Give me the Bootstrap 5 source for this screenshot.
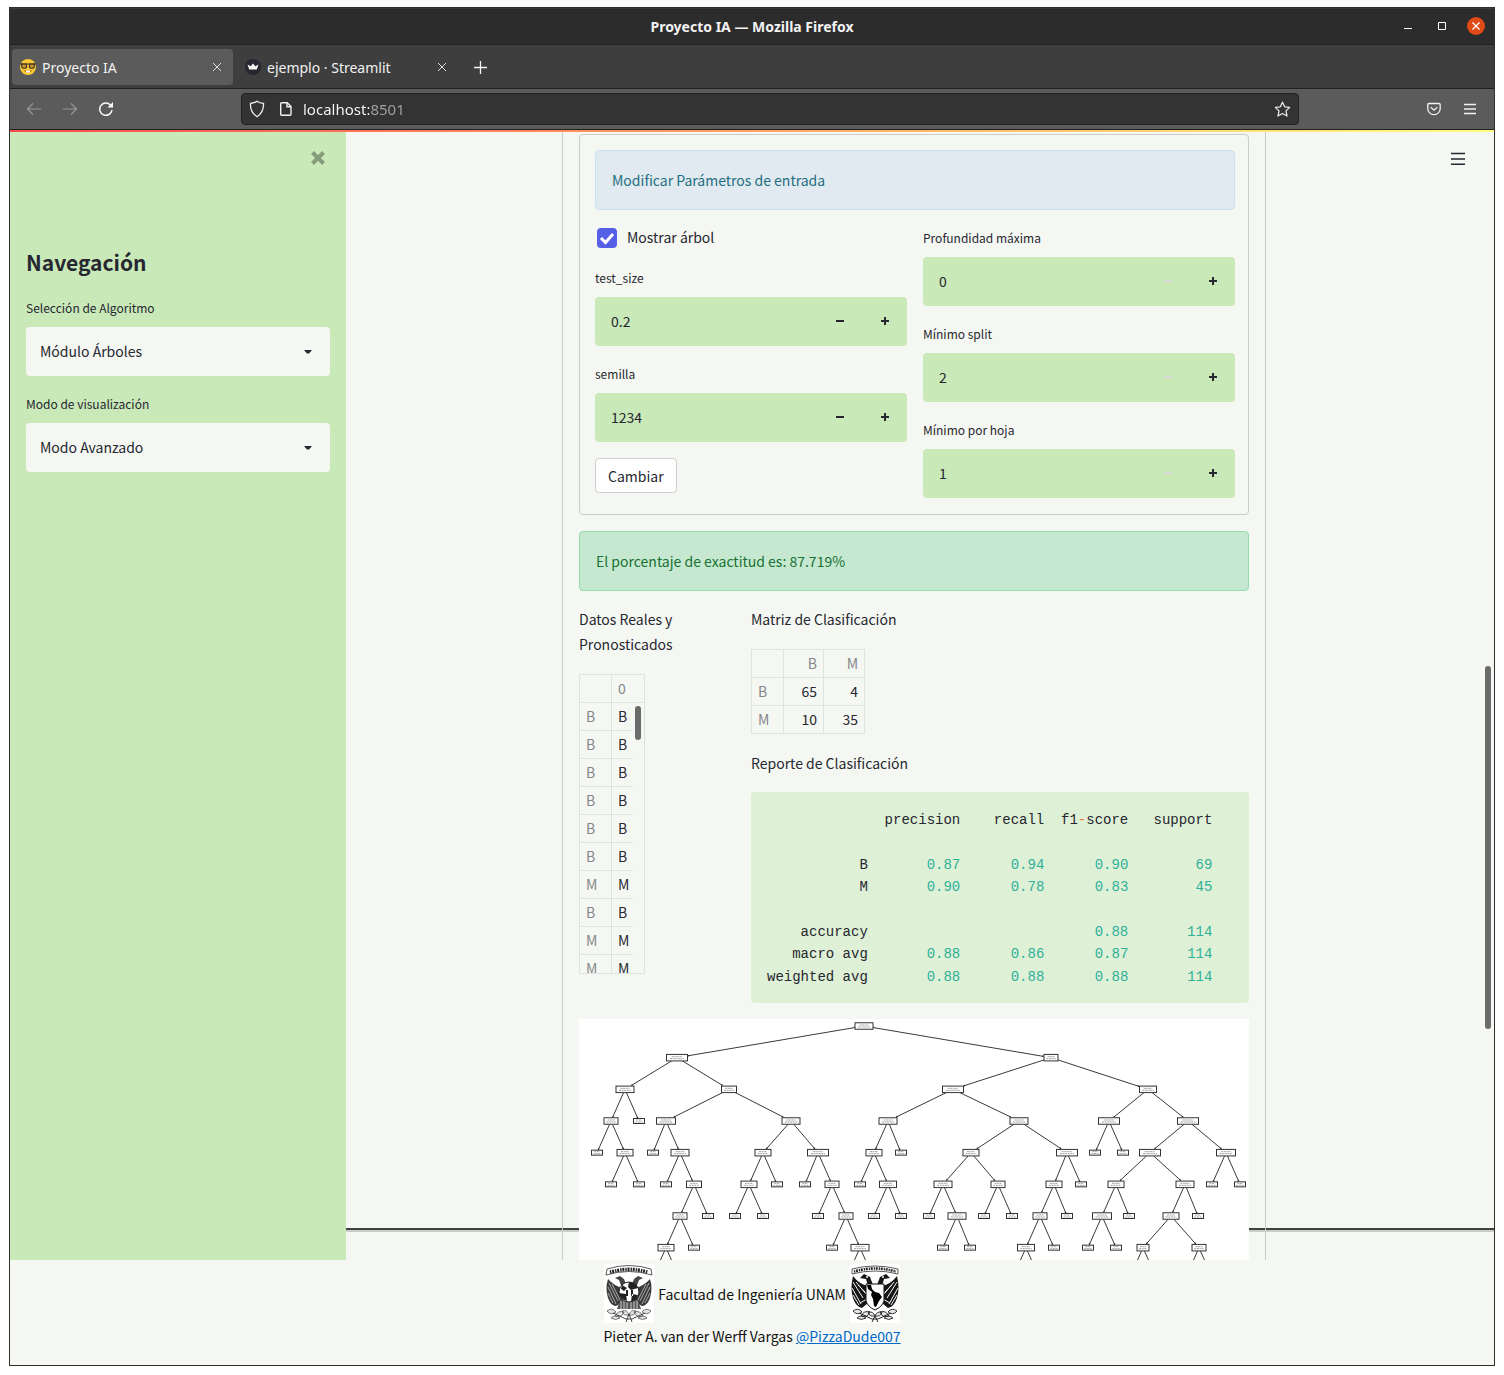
<!DOCTYPE html>
<html lang="es">
<head>
<meta charset="utf-8">
<meta name="viewport" content="width=device-width, initial-scale=1">
<title>Proyecto IA</title>
<link href="https://cdn.jsdelivr.net/npm/bootstrap@5.3.0/dist/css/bootstrap.min.css" rel="stylesheet">
<style>
:root { --ink:#262730; --paper:#f5f7f2; --green:#c9e9b8; --line:#cbcdca; --cell:#dfe2de; }
body { background:#fff; color:var(--ink); padding:7px 9px 9px; font:14px/26px "Noto Sans CJK SC", "Noto Sans", sans-serif; }
button, input, select { font:inherit; color:inherit; }
.desk-window { border:1px solid #2f2f2f; background:var(--paper); }
.chrome { font:14px/20px "Noto Sans", "Open Sans", sans-serif; color:#f2f2f2; }
.chrome button { background:none; border:0; padding:0; display:flex; align-items:center; justify-content:center; }
.title-bar { height:37px; background:#2c2c2c; border-top:1px solid #3b3b3b; border-bottom:1px solid #202020; }
.win-title { font-weight:700; }
.win-ctl { right:9px; top:0; bottom:2px; gap:16px; }
.win-ctl button { width:18px; height:18px; }
.tab-strip { height:44px; background:#3e3e3e; border-bottom:1px solid #202020; padding:4px 2px 3px; }
.tab-item { height:36px; width:221px; border-radius:4px; padding:0 7px 0 8px; gap:6px; }
.tab-item span { padding-top:2px; }
.tab-item.current { background:#5b5b5b; }
.tab-item button { width:18px; height:18px; }
.tool-bar { height:41px; background:#5b5b5b; border-bottom:1px solid #202020; }
.nav-btns { padding-left:15px; gap:18px; width:231px; }
.nav-btns button, .nav-end button { width:18px; height:18px; }
.url-box { height:32px; background:#333; border:1px solid #222; border-radius:4px; padding:0 7px; gap:11px; width:1058px; min-width:0; flex-shrink:1; }
.url-box input { border:0; outline:0; padding:0; font-size:15px; flex:1; min-width:0; color:transparent; background:linear-gradient(90deg,#fbfbfb 66px,#a3a3a3 66px); -webkit-background-clip:text; background-clip:text; }
.nav-end { padding-right:15px; gap:18px; }
.load-bar { height:2px; background:linear-gradient(90deg,#ff4b4b,#fffd80); }
.side-nav { width:336px; flex:none; background:var(--green); padding:0 16px; }
.side-close { height:52px; padding-right:4px; }
.side-close button { border:0; background:none; padding:0; width:16px; height:52px; display:flex; align-items:center; justify-content:center; }
.side-title { font-size:21px; line-height:36px; font-weight:700; margin:60px 0 16px; }
.field-label { display:block; font-size:12px; line-height:23px; margin-bottom:8px; }
.pick select { appearance:none; width:100%; height:49px; border:0; border-radius:4px; background:var(--paper); padding:0 14px 1px; }
.pick svg { right:17px; top:22px; pointer-events:none; }
.main-area { min-width:0; padding-right:12px; overflow:hidden; }
.foot-rule { left:0; right:0; bottom:28px; height:4px; background:linear-gradient(#3f4241 2px,#cbcdca 2px); margin:0; }
.main-menu { right:28px; top:19px; border:0; background:none; padding:0; line-height:0; }
.page-thumb { right:3px; top:534px; width:6px; height:363px; border-radius:3px; background:#6b6b6b; }
.center-block { max-width:704px; border:solid var(--line); border-width:0 1px; padding:2px 16px 0; }
.param-form { border:1px solid var(--line); border-radius:4px; padding:15px 13px 16px 15px; }
.note { height:60px; border:1px solid; border-radius:4px; padding:0 16px 1px; }
.note-info { background:#e0eaf0; border-color:#cae0ef; color:#1f6f80; }
.note-ok { background:#c6e8d0; border-color:#98dbae; color:#177233; }
.stack { display:flex; flex-direction:column; gap:16px; }
.tick-row { height:24px; gap:10px; padding-left:2px; }
.tick-row label { padding-bottom:2px; }
.tick-row input { appearance:none; width:20px; height:20px; margin:0; border-radius:4px; background:#5560e6; display:block; }
.tick-row svg { left:2px; top:4px; pointer-events:none; }
.num-box { height:49px; border-radius:4px; background:var(--green); overflow:hidden; }
.num-box input { flex:1; min-width:0; border:0; outline:0; background:none; padding:0 16px 2px; }
.num-box button { width:45px; border:0; background:none; padding:0 0 1px; line-height:0; }
.num-box button:disabled { color:#d5dbd8; }
.send-btn { align-self:flex-start; height:35px; border:1px solid #ccced0; border-radius:4px; background:#fff; padding:0 12px; }
.col-a { flex:0 0 156px; }
.cap-text { line-height:25px; }
.grid-tbl { border-collapse:collapse; line-height:27px; table-layout:fixed; }
.grid-tbl th { font-weight:400; color:#85878a; }
.grid-tbl th, .grid-tbl td { border:1px solid var(--cell); padding:0 6px; height:28px; }
.scroll-tbl { width:66px; height:300px; border:1px solid var(--cell); overflow:hidden; margin-top:17px; }
.scroll-tbl .grid-tbl { width:65px; margin:-1px 0 0 -1px; }
.scroll-tbl .gutter { border:0; padding:0; }
.scroll-tbl td { border-right:0; }
.tbl-thumb { right:3px; top:31px; width:6px; height:34px; border-radius:3px; background:#6b6b6b; }
.matrix { width:114px; text-align:right; margin:17px 0; }
.matrix tbody th { text-align:left; }
.report { margin:16px 0 0; padding:17px 16px 15px; border-radius:4px; background:#def0d5; font:14px/1.6 "Liberation Mono", monospace; color:var(--ink); overflow:hidden; }
.report b { font-weight:400; color:#2eb09a; }
.report i { font-style:normal; color:#ed7d31; }
.tree-pic { background:#fff; display:block; width:100%; overflow:hidden; }
.site-foot { padding:4px 0 16px; text-align:center; color:#111; }
.site-foot a { color:#0068c9; }
</style>
</head>
<body>
<div class="desk-window">
  <header class="chrome">
    <div class="title-bar position-relative d-flex align-items-center justify-content-center">
      <span class="win-title">Proyecto IA — Mozilla Firefox</span>
      <div class="win-ctl position-absolute d-flex align-items-center">
        <button type="button" aria-label="Minimizar"><svg width="18" height="18"><path d="M5 11.500h8" stroke="#fff"/></svg></button>
        <button type="button" aria-label="Maximizar"><svg width="18" height="18"><path d="M5.500 5.500h7v7h-7z" fill="none" stroke="#fff"/></svg></button>
        <button type="button" aria-label="Cerrar"><svg width="18" height="18"><circle cx="9" cy="9" r="9" fill="#df4a16"/><path d="M5.500 5.500l7 7m0-7l-7 7" stroke="#fff" stroke-width="1.400"/></svg></button>
      </div>
    </div>
    <div class="tab-strip d-flex">
      <div class="tab-item current d-flex align-items-center">
        <svg width="16" height="16" viewBox="0 0 16 16"><circle cx="8" cy="8" r="8" fill="#fcc934"/><path d="M1.500 5h5v3.500q-2.500 1.500-4.500 0zM9.500 5h5L14 8.500q-2 1.500-4.500 0z" fill="#d29a2e" stroke="#3d3428" stroke-width="1.200"/><path d="M0 5h16" stroke="#3d3428"/><path d="M3.500 11.500h9q-4.500 4-9 0z" fill="#a3651d"/><path d="M6 11.500h4v2H6z" fill="#fff"/></svg>
        <span class="flex-grow-1">Proyecto IA</span>
        <button type="button" aria-label="Cerrar pestaña"><svg width="10" height="10"><path d="M1 1l8 8m0-8l-8 8" stroke="#ddd"/></svg></button>
      </div>
      <div class="tab-item d-flex align-items-center ms-1">
        <svg width="16" height="16" viewBox="0 0 16 16"><circle cx="8" cy="8" r="8" fill="#262730"/><path d="M2.500 5.500l3.200 1.700L8 4.500l2.300 2.700 3.200-1.700-1.700 5H4.200z" fill="#f4f4f4"/></svg>
        <span class="flex-grow-1">ejemplo · Streamlit</span>
        <button type="button" aria-label="Cerrar pestaña"><svg width="10" height="10"><path d="M1 1l8 8m0-8l-8 8" stroke="#ddd"/></svg></button>
      </div>
      <button type="button" class="ms-3" aria-label="Pestaña nueva"><svg width="13" height="13"><path d="M6.500 0v13M0 6.500h13" stroke="#f4f4f4" stroke-width="1.300"/></svg></button>
    </div>
    <div class="tool-bar d-flex align-items-center">
      <div class="nav-btns d-flex">
        <button type="button" aria-label="Atrás" disabled><svg width="16" height="14" fill="none" stroke="#979797" stroke-width="1.200"><path d="M15 7H1.500M7 1.500L1.500 7 7 12.500"/></svg></button>
        <button type="button" aria-label="Adelante" disabled><svg width="16" height="14" fill="none" stroke="#979797" stroke-width="1.200"><path d="M1 7h13.500M9 1.500L14.500 7 9 12.500"/></svg></button>
        <button type="button" aria-label="Recargar"><svg width="16" height="16" fill="none" stroke="#fbfbfb" stroke-width="1.500"><path d="M14 9A6.200 6.200 0 1 1 12.500 4"/><path d="M15 1v5.500H9.500z" fill="#fbfbfb" stroke="none"/></svg></button>
      </div>
      <div class="url-box d-flex align-items-center">
        <svg width="16" height="18" viewBox="0 0 16 18" fill="none" stroke="#f1f1f1" stroke-width="1.300"><path d="M8 1.200c2 1.600 4 2 6.500 2.200.3 6-1.500 10-6.500 13.300C3 13.400 1.200 9.400 1.500 3.400 4 3.200 6 2.800 8 1.200z"/></svg>
        <svg class="ms-1" width="12" height="14" viewBox="0 0 12 14" fill="none" stroke="#f1f1f1" stroke-width="1.400"><path d="M1.700.8h5.600L11 4.500v7.800q0 1-1 1H1.700q-1 0-1-1V1.700q0-1 1-1z"/><path d="M7 .8v4h4"/></svg>
        <input type="text" aria-label="Dirección" value="localhost:8501">
        <svg width="17" height="17" viewBox="0 0 17 17" fill="none" stroke="#e8e8e8" stroke-width="1.300" stroke-linejoin="round"><path d="M8.500 1.200l2.200 4.600 5 .6-3.700 3.500 1 5.100-4.500-2.500L4 15l1-5.100L1.300 6.400l5-.6z"/></svg>
      </div>
      <div class="nav-end ms-auto d-flex">
        <button type="button" aria-label="Pocket"><svg width="14" height="14" fill="none" stroke="#f1f1f1" stroke-width="1.300"><path d="M2 1.500h10q1.200 0 1.200 1.200V6.500A6.200 6.200 0 0 1 .8 6.500V2.700Q.8 1.500 2 1.500z"/><path d="M3.800 5.200L7 8.200l3.200-3"/></svg></button>
        <button type="button" aria-label="Menú"><svg width="12" height="12" stroke="#f1f1f1" stroke-width="1.300"><path d="M0 1.500h12M0 6h12M0 10.500h12"/></svg></button>
      </div>
    </div>
  </header>

  <div class="load-bar"></div>
  <div class="d-flex">
    <aside class="side-nav">
      <div class="side-close d-flex justify-content-end"><button type="button" aria-label="Cerrar barra lateral"><svg width="14" height="14"><path d="M1.500 1.500l11 11M12.500 1.500l-11 11" stroke="#859d7b" stroke-width="4"/></svg></button></div>
      <h2 class="side-title">Navegación</h2>
      <div class="stack">
        <div><label class="field-label" for="alg">Selección de Algoritmo</label>
          <div class="pick position-relative"><select id="alg"><option>Módulo Árboles</option></select><svg class="position-absolute" width="10" height="6"><path d="M1 1h8L6 4.500H4z" fill="#262730"/></svg></div></div>
        <div><label class="field-label" for="modo">Modo de visualización</label>
          <div class="pick position-relative"><select id="modo"><option>Modo Avanzado</option></select><svg class="position-absolute" width="10" height="6"><path d="M1 1h8L6 4.500H4z" fill="#262730"/></svg></div></div>
      </div>
    </aside>

    <main class="main-area flex-grow-1 position-relative">
      <hr class="foot-rule position-absolute border-0 opacity-100">
      <div class="center-block mx-auto position-relative">
        <form class="param-form stack">
          <div class="note note-info d-flex align-items-center">Modificar Parámetros de entrada</div>
          <div class="d-flex gap-3">
            <div class="stack flex-fill">
              <div class="tick-row d-flex align-items-center"><span class="position-relative"><input type="checkbox" id="arbol" checked><svg class="position-absolute" width="16" height="13"><path d="M2 6l4.500 4.500L14 2" fill="none" stroke="#fff" stroke-width="3"/></svg></span><label for="arbol">Mostrar árbol</label></div>
              <div><label class="field-label" for="ts">test_size</label>
                <div class="num-box d-flex"><input id="ts" type="text" value="0.2"><button type="button" aria-label="Menos"><svg width="8" height="8" fill="currentColor"><path d="M0 3h8v2H0z"/></svg></button><button type="button" aria-label="Más"><svg width="8" height="8" fill="currentColor"><path d="M3 0h2v3h3v2H5v3H3V5H0V3h3z"/></svg></button></div></div>
              <div><label class="field-label" for="sem">semilla</label>
                <div class="num-box d-flex"><input id="sem" type="text" value="1234"><button type="button" aria-label="Menos"><svg width="8" height="8" fill="currentColor"><path d="M0 3h8v2H0z"/></svg></button><button type="button" aria-label="Más"><svg width="8" height="8" fill="currentColor"><path d="M3 0h2v3h3v2H5v3H3V5H0V3h3z"/></svg></button></div></div>
              <button type="button" class="send-btn">Cambiar</button>
            </div>
            <div class="stack flex-fill">
              <div><label class="field-label" for="prof">Profundidad máxima</label>
                <div class="num-box d-flex"><input id="prof" type="text" value="0"><button type="button" aria-label="Menos" disabled><svg width="8" height="8" fill="currentColor"><path d="M0 3h8v2H0z"/></svg></button><button type="button" aria-label="Más"><svg width="8" height="8" fill="currentColor"><path d="M3 0h2v3h3v2H5v3H3V5H0V3h3z"/></svg></button></div></div>
              <div><label class="field-label" for="split">Mínimo split</label>
                <div class="num-box d-flex"><input id="split" type="text" value="2"><button type="button" aria-label="Menos" disabled><svg width="8" height="8" fill="currentColor"><path d="M0 3h8v2H0z"/></svg></button><button type="button" aria-label="Más"><svg width="8" height="8" fill="currentColor"><path d="M3 0h2v3h3v2H5v3H3V5H0V3h3z"/></svg></button></div></div>
              <div><label class="field-label" for="hoja">Mínimo por hoja</label>
                <div class="num-box d-flex"><input id="hoja" type="text" value="1"><button type="button" aria-label="Menos" disabled><svg width="8" height="8" fill="currentColor"><path d="M0 3h8v2H0z"/></svg></button><button type="button" aria-label="Más"><svg width="8" height="8" fill="currentColor"><path d="M3 0h2v3h3v2H5v3H3V5H0V3h3z"/></svg></button></div></div>
            </div>
          </div>
        </form>
        <div class="note note-ok d-flex align-items-center my-3">El porcentaje de exactitud es: 87.719%</div>
        <div class="d-flex gap-3 mb-3">
          <div class="col-a">
            <div class="cap-text">Datos Reales y<br>Pronosticados</div>
            <div class="scroll-tbl position-relative">
              <table class="grid-tbl">
                <colgroup><col style="width:32px"><col style="width:21px"><col style="width:12px"></colgroup>
                <thead><tr><th></th><th colspan="2">0</th></tr></thead>
                <tbody id="pares"></tbody>
              </table>
              <span class="tbl-thumb position-absolute"></span>
            </div>
          </div>
          <div class="flex-grow-1">
            <div class="cap-text">Matriz de Clasificación</div>
            <table class="grid-tbl matrix">
              <colgroup><col style="width:32px"><col style="width:40px"><col style="width:41px"></colgroup>
              <thead><tr><th></th><th>B</th><th>M</th></tr></thead>
              <tbody><tr><th>B</th><td>65</td><td>4</td></tr><tr><th>M</th><td>10</td><td>35</td></tr></tbody>
            </table>
            <div class="cap-text">Reporte de Clasificación</div>
<pre class="report">              precision    recall  f1<i>-</i>score   support

           B       <b>0.87</b>      <b>0.94</b>      <b>0.90</b>        <b>69</b>
           M       <b>0.90</b>      <b>0.78</b>      <b>0.83</b>        <b>45</b>

    accuracy                           <b>0.88</b>       <b>114</b>
   macro avg       <b>0.88</b>      <b>0.86</b>      <b>0.87</b>       <b>114</b>
weighted avg       <b>0.88</b>      <b>0.88</b>      <b>0.88</b>       <b>114</b></pre>
          </div>
        </div>
        <svg class="tree-pic" id="tree" viewBox="0 0 670 241" role="img" aria-label="Árbol de decisión"></svg>
      </div>
      <button type="button" class="main-menu position-absolute" aria-label="Menú"><svg width="15" height="15" stroke="#262730" stroke-width="1.600"><path d="M0 2.500h14M0 8h14M0 13.200h14"/></svg></button>
      <span class="page-thumb position-absolute"></span>
    </main>
  </div>

  <footer class="site-foot">
    <div class="d-flex justify-content-center align-items-center gap-1">
      <svg width="50" height="59" viewBox="0 0 50 59" role="img" aria-label="Escudo de Ingeniería"><path d="M0 0h50v59H0z" fill="#fff"/>
        <g fill="none" stroke="#333"><path d="M3 5Q25-2 47 5l1 6Q25 4 2 11z" fill="#fff" stroke-width=".8"/><path d="M6 8.200Q25 2.500 44 8.200" stroke="#222" stroke-width="3.500" stroke-dasharray="1.400 .8 2 1"/></g>
        <path d="M4 15Q1 24 4 34q3 8 8 8l7-4V24Q10 22 4 15zM46 15q3 9 0 19-3 8-8 8l-7-4V24q9-2 15-9z" fill="#3a3a3a"/>
        <path d="M5 19l9 18M4 23l8 17M4 29l5 10M8 20l8 16M45 19l-9 18M46 23l-8 17M46 29l-5 10M42 20l-8 16" stroke="#ddd" stroke-width=".7"/>
        <path d="M23 23l-3-8-4-3-5 2 4 2 3 8zM27 23l3-8 4-3 5 2-4 2-3 8z" fill="#444"/>
        <path d="M16 36h18l3 9H13z" fill="#555"/><path d="M17 37v8m3-8v8m3-8v8m4-8v8m3-8v8m3-8v8" stroke="#eee" stroke-width=".8"/>
        <circle cx="25" cy="28" r="10" fill="#fff" stroke="#222"/><path d="M25 18a10 10 0 0 1 9 6l-7 2-3-3zM15 29l7 1 1 7q-7-2-8-8zM34 31l-6-1-1 8q6-2 7-7zM18 21l5 3-3 3-3-2zM22 26h2v6h-2zM27 26h2v6h-2z" fill="#222"/>
        <g fill="#e4e4e4" stroke="#555" stroke-width=".8"><path d="M3 47q5-4 9 1-5 4-9-1zM11 52q3-6 9-4-2 6-9 4zM18 47q5-2 7 4-6 1-7-4zM32 47q-5-2-7 4 6 1 7-4zM39 52q-3-6-9-4 2 6 9 4zM47 47q-5-4-9 1 5 4 9-1zM7 54q4-4 9 0-5 3-9 0zM43 54q-4-4-9 0 5 3 9 0z"/></g><path d="M9 49l13 6h6l13-6M22 58l3-8 3 8" fill="none" stroke="#444"/></svg>
      <span>Facultad de Ingeniería UNAM</span>
      <svg width="50" height="59" viewBox="0 0 50 59" role="img" aria-label="Escudo de la UNAM"><path d="M0 0h50v59H0z" fill="#fff"/>
        <path d="M2 5Q25-1 48 5v5Q25 4 2 10z" fill="#fff" stroke="#333" stroke-width=".8"/><path d="M4 7.500Q25 1.500 46 7.500" fill="none" stroke="#222" stroke-width="2.600" stroke-dasharray="1.200 .8 2 1"/>
        <path d="M3 12Q0 24 3 34q3 9 9 10l6-5V22Q9 20 3 12zM47 12q3 12 0 22-3 9-9 10l-6-5V22q9-2 15-10z" fill="#171717"/>
        <path d="M3 18l10 16M2 24l9 16M6 18l10 12M3 31l6 10M8 21l8 8M47 18L37 34M48 24l-9 16M44 18L34 30M47 31l-6 10M42 21l-8 8M10 39l7-4M40 39l-7-4" stroke="#f4f4f4" stroke-width="1"/>
        <path d="M23 21l-3-8-6-3-4 4 6 1 2 7zM27 21l3-8 6-3 4 4-6 1-2 7z" fill="#171717"/><circle cx="17" cy="13" r="1" fill="#fff"/><circle cx="33" cy="13" r="1" fill="#fff"/>
        <path d="M16 20h18v17q-2 6-9 9-7-3-9-9z" fill="#fff" stroke="#111"/><path d="M17 21h4l1 4 3 3 4 1 3 4-3 4-3 6-2-1-1-7-2-4 1-3-4-3z" fill="#000"/>
        <g fill="#e4e4e4" stroke="#222" stroke-width=".9"><path d="M3 47q5-4 9 1-5 4-9-1zM11 52q3-6 9-4-2 6-9 4zM18 48q5-1 7 4-6 1-7-4zM32 48q-5-1-7 4 6 1 7-4zM39 52q-3-6-9-4 2 6 9 4zM47 47q-5-4-9 1 5 4 9-1zM7 54q4-4 9 0-5 3-9 0zM43 54q-4-4-9 0 5 3 9 0z"/></g><path d="M9 49l13 6h6l13-6M22 58l3-6 3 6" fill="none" stroke="#222"/></svg>
    </div>
    <div>Pieter A. van der Werff Vargas <a href="#">@PizzaDude007</a></div>
  </footer>
</div>
<script>
// Rows of the real / predicted table
document.getElementById('pares').innerHTML = [...'BBBBBBMBMM'].map(c => `<tr><th>${c}</th><td>${c}</td><td class="gutter"></td></tr>`).join('');

// Decision tree: [x, width, left child, right child]; a plain number is a leaf
const tail = (x, w) => [x, w, x - 14, x + 14];
const tree = [285, 18,
  [98, 21,
    [46, 18, [32, 14, 18, [46, 16, 32, 60]], 60],
    [150, 15,
      [87, 19, 74, [101, 18, 87, [115, 15, [101, 14, tail(87, 16), 115], 129]]],
      [212, 18, [184, 16, [170, 16, 156, 184], 198],
        [239, 21, 226, [253, 14, 239, [267, 14, 253, tail(281, 18)]]]]]],
  [472, 14,
    [374, 21,
      [309, 18, [295, 16, 281, [309, 17, 295, 322]], 322],
      [440, 18,
        [392, 16, [364, 18, 350, [378, 18, 364, 391]], [419, 14, 405, 433]],
        [488, 21, [475, 16, [461, 14, tail(447, 17), 475], 488], 502]]],
    [569, 17,
      [530, 21, 516, 544],
      [609, 21,
        [571, 21, [537, 16, [523, 19, 509, 537], 550],
          [606, 18, [592, 16, tail(564, 12), tail(620, 14)], 619]],
        [647, 19, 633, 661]]]]];
let edges = '', boxes = '';
function draw(n, level) {
  const leaf = typeof n === 'number';
  const node = { x: leaf ? n : n[0], y: 7 + level * 95 / 3, w: leaf ? 11 : n[1], h: leaf ? 5 : 6.5 };
  const { x, y, w, h } = node;
  boxes += `<rect x="${x - w / 2}" y="${y - h / 2}" width="${w}" height="${h}" fill="#fff" stroke="#333"/>` +
    `<path d="M${x - w / 4} ${y - 1}h${w / 2}M${x - w / 3} ${y + 1}h${w / 1.5}" stroke="#999" stroke-width=".9" stroke-dasharray="2 .6"/>`;
  if (!leaf) for (const child of [n[2], n[3]]) {
    const c = draw(child, level + 1), dx = c.x - x, dy = c.y - y;
    const a = Math.min(w / 2 / Math.abs(dx), h / 2 / dy);
    const b = 1 - Math.min((c.w / 2 + 1) / Math.abs(dx), (c.h / 2 + 1) / dy);
    const ex = x + dx * b, ey = y + dy * b;
    edges += `<path d="M${x + dx * a} ${y + dy * a}L${ex} ${ey}" stroke="#3a3a3a"/><circle cx="${ex}" cy="${ey}" r=".8" fill="#222"/>`;
  }
  return node;
}
draw(tree, 0);
document.getElementById('tree').innerHTML = edges + boxes;
</script>
<script src="https://cdn.jsdelivr.net/npm/bootstrap@5.3.0/dist/js/bootstrap.bundle.min.js"></script>
</body>
</html>
